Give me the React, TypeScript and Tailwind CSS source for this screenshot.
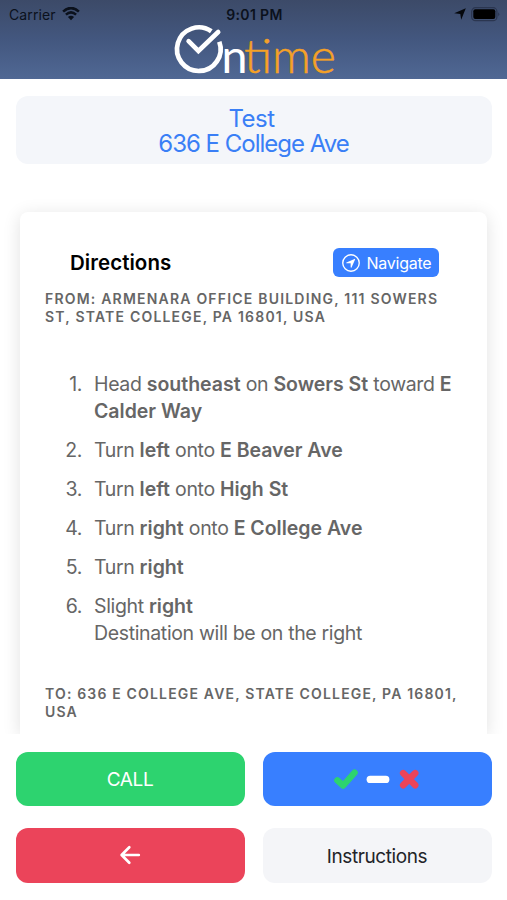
import React from "react";
import { IoNavigateCircleOutline } from "react-icons/io5";

const B = ({ children }: { children: React.ReactNode }) => (
  <b className="font-semibold tracking-normal">{children}</b>
);

const STEPS: React.ReactNode[] = [
  <>
    Head <B>southeast</B> on <B>Sowers St</B> toward{" "}
    <B>
      E<br />
      Calder Way
    </B>
  </>,
  <>
    Turn <B>left</B> onto <B>E Beaver Ave</B>
  </>,
  <>
    Turn <B>left</B> onto <B>High St</B>
  </>,
  <>
    Turn <B>right</B> onto <B>E College Ave</B>
  </>,
  <>
    Turn <B>right</B>
  </>,
  <>
    Slight <B>right</B>
    <div>Destination will be on the right</div>
  </>,
];

function StatusBar() {
  return (
    <div className="flex h-[26px] items-center justify-between pl-[9px] pr-[7px] pt-[2px] text-[14px] text-[#0b111c]">
      <div className="flex flex-1 items-center gap-[6px]">
        <span className="tracking-[0.1px]">Carrier</span>
        <svg className="h-[14px] w-[18px]" viewBox="0 0 18 14" fill="none">
          <path d="M1.1 4.6Q9-2.5 16.9 4.6" stroke="currentColor" strokeWidth="2.6" />
          <path d="M3.9 7.6Q9 3.1 14.1 7.6" stroke="currentColor" strokeWidth="2.5" />
          <path d="M9 13.2L5.9 10Q9 7.6 12.1 10Z" fill="currentColor" />
        </svg>
      </div>
      <span className="font-semibold tracking-[0.35px]">9:01 PM</span>
      <div className="flex flex-1 items-center justify-end gap-[5px]">
        <svg className="h-[12px] w-[12px]" viewBox="0 0 12 12">
          <path d="M11.8.2L7.2 11.8L6.3 6L.2 5.2Z" fill="#05080d" />
        </svg>
        <svg className="h-[15px] w-[29px]" viewBox="0 0 29 15">
          <rect x="0.7" y="0.7" width="25.2" height="13" rx="3.8" fill="none" stroke="#2b3650" strokeWidth="1.2" />
          <rect x="2.3" y="2.3" width="22" height="9.8" rx="2" fill="#000" />
          <path d="M27.2 5.2Q29.4 7.2 27.2 9.2Z" fill="#2b3650" />
        </svg>
      </div>
    </div>
  );
}

function Logo() {
  return (
    <svg className="mx-auto h-[56px] w-[164px] overflow-visible" viewBox="0 0 164 56">
      {/* clock face, open at the upper right where the hand passes */}
      <path d="M39.3 8.3A21.8 21.8 0 1 0 47.3 18.7" fill="none" stroke="#fff" strokeWidth="4.7" />
      <path d="M16.6 18.2L26.4 28L46.2 9" fill="none" stroke="#fff" strokeWidth="4.6" strokeLinecap="round" />
      <text x="49.5" y="50.2" fontFamily="Lato" fontSize="47" fill="#fff" textLength="26" lengthAdjust="spacingAndGlyphs">
        n
      </text>
      <text
        x="72"
        y="50.2"
        fontFamily="Lato"
        fontWeight="300"
        fontSize="47"
        fill="#f5a126"
        stroke="#f5a126"
        strokeWidth="0.5"
        textLength="92"
        lengthAdjust="spacingAndGlyphs"
      >
        time
      </text>
    </svg>
  );
}

function StatusIcons() {
  return (
    <svg className="h-[22px] w-[88px]" viewBox="0 0 88 22" fill="none" strokeLinecap="round">
      <path d="M4.4 12.4L10.2 17.5L21.6 4.6" stroke="#2dd36f" strokeWidth="6.4" strokeLinejoin="round" />
      <path d="M37.2 11.4H52.8" stroke="#fff" strokeWidth="7.2" />
      <path d="M70.2 5.2L82.2 17.2M82.2 5.2L70.2 17.2" stroke="#eb445a" strokeWidth="6.6" />
    </svg>
  );
}

export default function App() {
  return (
    <div className="flex h-[900px] w-[507px] flex-col overflow-hidden bg-white font-['Inter',sans-serif]">
      <header className="h-[79px] shrink-0 bg-linear-to-b from-[#3c4a68] via-[#43577f] to-[#506894]">
        <StatusBar />
        <div className="-mt-[3px]">
          <Logo />
        </div>
      </header>

      <main className="flex min-h-0 flex-1 flex-col overflow-hidden pt-[17px]">
        <div className="mx-[15.5px] h-[68px] shrink-0 rounded-xl bg-[#f4f6fa] pt-[10px] text-center text-[24px] leading-[25px] text-[#3a7ff6]">
          <div className="pr-[4px] tracking-[-0.5px]">Test</div>
          <div className="tracking-[-1px]">636 E College Ave</div>
        </div>

        <section className="mx-5 mt-12 flex-1 rounded-t-lg bg-white px-[25px] pt-9 text-[#666] shadow-[0_3px_18px_rgba(0,0,0,0.12)]">
          <div className="flex h-[29px] items-center justify-between pl-[25px] pr-[23px]">
            <h1 className="pt-[2px] text-[20.5px] font-semibold tracking-[0.05px] text-black">Directions</h1>
            <button className="flex h-[29px] w-[106px] items-center justify-center gap-[5px] rounded-md bg-[#387fff] pr-[1px] text-[16px] tracking-[-0.25px] text-white">
              <IoNavigateCircleOutline className="size-[22px]" />
              Navigate
            </button>
          </div>

          <p className="mt-[13px] whitespace-nowrap text-[14px] font-semibold leading-[18px] tracking-[1.2px]">
            FROM: ARMENARA OFFICE BUILDING, 111 SOWERS
            <br />
            ST, STATE COLLEGE, PA 16801, USA
          </p>

          <ol className="mt-[45px] flex flex-col gap-3 whitespace-nowrap text-[19.5px] leading-[27px] tracking-[-0.35px]">
            {STEPS.map((step, i) => (
              <li key={i} className="flex">
                <span className="w-[49px] shrink-0 pr-[12px] text-right">{i + 1}.</span>
                <div>{step}</div>
              </li>
            ))}
          </ol>

          <p className="mt-[38px] whitespace-nowrap text-[14px] font-semibold leading-[18px] tracking-[1.17px]">
            TO: 636 E COLLEGE AVE, STATE COLLEGE, PA 16801,
            <br />
            USA
          </p>
        </section>
      </main>

      <footer className="grid h-[166px] shrink-0 grid-cols-2 content-start gap-x-[18px] gap-y-[22px] bg-white px-[15.5px] pt-[17.5px] text-[19px] tracking-[-0.4px]">
        <button className="flex h-[54.5px] items-center justify-center rounded-xl bg-[#2dd36f] pt-[2px] text-white">CALL</button>
        <button className="flex h-[54.5px] items-center justify-center rounded-xl bg-[#387fff]">
          <StatusIcons />
        </button>
        <button className="flex h-[54.5px] items-center justify-center rounded-xl bg-[#eb445a] text-white">
          <svg className="h-[20px] w-[22px]" viewBox="0 0 22 20" fill="none" stroke="currentColor" strokeWidth="2.7" strokeLinecap="round" strokeLinejoin="round">
            <path d="M10.3 2.3L2.6 10L10.3 17.7M3.2 10H19.8" />
          </svg>
        </button>
        <button className="flex h-[54.5px] items-center justify-center rounded-xl bg-[#f4f5f8] pt-[3px] text-[#222428]">Instructions</button>
      </footer>
    </div>
  );
}
